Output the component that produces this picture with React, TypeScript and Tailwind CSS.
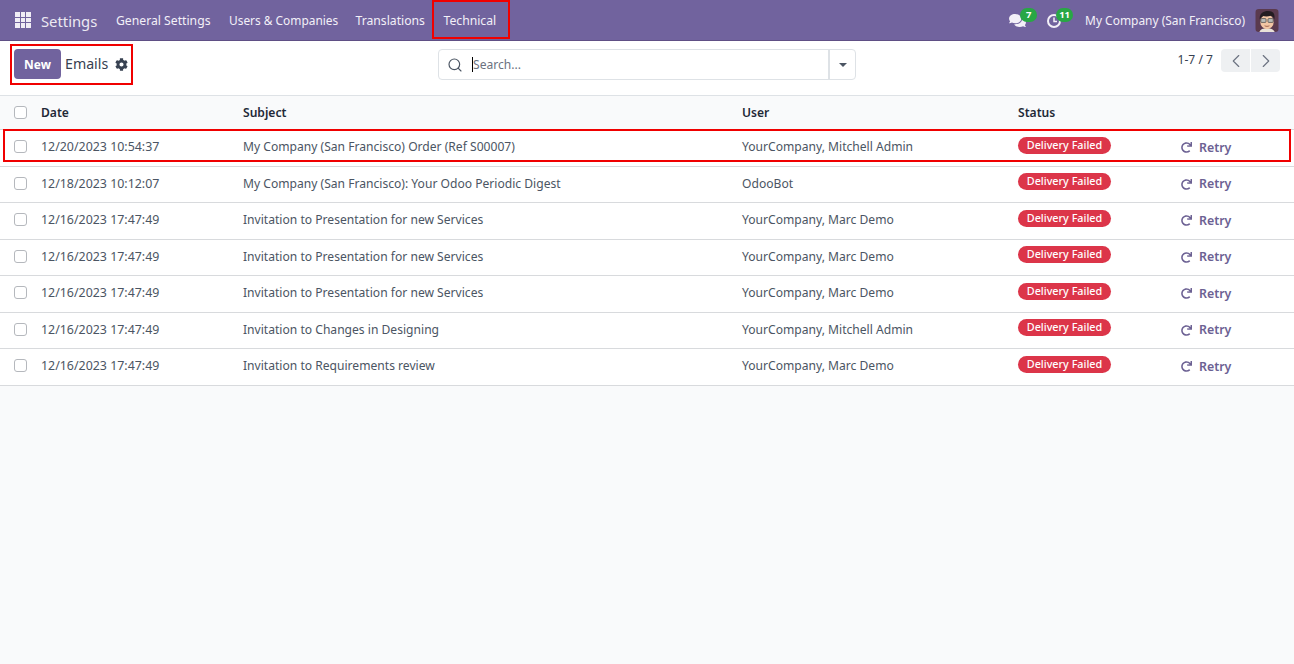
import { FaCog, FaComments, FaRedo } from "react-icons/fa";
import { Search, ChevronLeft, ChevronRight } from "lucide-react";

const rows = [
  ["12/20/2023 10:54:37", "My Company (San Francisco) Order (Ref S00007)", "YourCompany, Mitchell Admin"],
  ["12/18/2023 10:12:07", "My Company (San Francisco): Your Odoo Periodic Digest", "OdooBot"],
  ["12/16/2023 17:47:49", "Invitation to Presentation for new Services", "YourCompany, Marc Demo"],
  ["12/16/2023 17:47:49", "Invitation to Presentation for new Services", "YourCompany, Marc Demo"],
  ["12/16/2023 17:47:49", "Invitation to Presentation for new Services", "YourCompany, Marc Demo"],
  ["12/16/2023 17:47:49", "Invitation to Changes in Designing", "YourCompany, Mitchell Admin"],
  ["12/16/2023 17:47:49", "Invitation to Requirements review", "YourCompany, Marc Demo"],
];

function Avatar() {
  return (
    <svg viewBox="0 0 24 24" className="ml-[10px] h-[23px] w-6 rounded-[4px]">
      <rect width="24" height="24" fill="#5a3a4e" />
      <path d="M4 24c1-3 4-4 8-4s7 1 8 4z" fill="#e9e2d8" />
      <ellipse cx="12" cy="13.500" rx="7" ry="7.500" fill="#f2c6a4" />
      <path d="M4.500 11C3.500 5 8 2 13 2s8 3 6.500 9c-.5-2.500-1.500-3.500-3.500-4-3 1-6 1-8 .3-1.500 1-3 2-3.500 3.700z" fill="#241d22" />
      <rect x="5.500" y="10" width="5.500" height="4" rx="1" fill="#bdbdb8" stroke="#3a3a3a" strokeWidth="0.7" />
      <rect x="13" y="10" width="5.500" height="4" rx="1" fill="#bdbdb8" stroke="#3a3a3a" strokeWidth="0.7" />
      <path d="M9.500 17.500c1.500.8 3.500.8 5 0" stroke="#8a4a3a" strokeWidth="0.8" fill="none" />
    </svg>
  );
}

function Checkbox() {
  return <span className="block h-[13px] w-[13px] rounded-[3px] border border-[#b5b8bd] bg-white" />;
}

export default function App() {
  return (
    <div className="relative h-[664px] w-[1294px] overflow-hidden bg-[#f9fafb] font-['Noto_Sans',sans-serif] text-[12.1px] leading-[18px] text-[#4b5563]">
      {/* Top bar */}
      <nav className="flex h-[41px] items-center border-b border-[#5f4f85] bg-[#71639e] text-[#f3f0f8]">
        <div className="ml-[15px] grid h-4 w-4 grid-cols-3 gap-[1px]">
          {Array.from({ length: 9 }).map((_, i) => (
            <span key={i} className="bg-[#f0edf5]" />
          ))}
        </div>
        <span className="ml-[10px] w-[75px] pt-[2px] text-[14.8px] text-[#ece9f2]">Settings</span>
        <div className="grid grid-cols-[113px_126.500px_88px_auto] whitespace-nowrap pt-[2px] text-[12.2px]">
          <span>General Settings</span>
          <span className="-mt-px text-[11.9px]">Users &amp; Companies</span>
          <span>Translations</span>
          <span>Technical</span>
        </div>
        <div className="ml-auto flex items-center pr-[15px]">
          <div className="relative mr-[21px] h-4 w-[17px]">
            <FaComments className="absolute left-0 top-[1px] h-[15px] w-[17px] text-[#f3f0f8]" />
            <span className="absolute left-[11px] top-[-4px] flex h-[14px] w-[17px] items-center justify-center rounded-full bg-[#28a745] text-[9.500px] font-bold text-white">7</span>
          </div>
          <div className="relative mr-[24px] h-4 w-[14px]">
            <svg viewBox="0 0 14 14" className="absolute left-0 top-[2px] h-[14px] w-[14px]" fill="none" stroke="#f3f0f8">
              <circle cx="7" cy="7" r="6" strokeWidth="2" />
              <path d="M7 3.500V7.500H10" strokeWidth="1.500" />
            </svg>
            <span className="absolute left-[9px] top-[-4px] flex h-[14px] w-[17px] items-center justify-center rounded-full bg-[#28a745] text-[9.500px] font-bold text-white">11</span>
          </div>
          <span className="pt-[2px] text-[11.95px]">My Company (San Francisco)</span>
          <Avatar />
        </div>
      </nav>

      {/* Control panel */}
      <div className="relative flex h-[55px] items-start border-b border-[#dee2e6] bg-white">
        <div className="ml-[14px] mt-2 flex items-center">
          <button className="h-[30px] w-[47px] rounded-[4px] bg-[#71639e] pt-[2px] text-[12px] font-bold text-white">New</button>
          <span className="ml-[4px] text-[14.2px] text-[#374151]">Emails</span>
          <FaCog className="ml-[7px] h-[13px] w-[13px] text-[#374151]" />
        </div>
        <div className="absolute left-[438px] top-[8px] flex h-[31px] w-[418px] rounded-[4px] border border-[#dee2e6]">
          <div className="flex flex-1 items-center pl-[8px]">
            <Search className="h-4 w-4 text-[#4b5563]" strokeWidth={1.75} />
            <span className="ml-[9px] h-[15px] w-px bg-black" />
            <span className="text-[#6b7280]">Search...</span>
          </div>
          <div className="flex w-[27px] items-center justify-center border-l-2 border-[#dee2e6]">
            <span className="border-x-[4px] border-t-[4px] border-x-transparent border-t-[#4b5563]" />
          </div>
        </div>
        <div className="ml-auto mr-[14px] mt-2 flex items-center">
          <span className="mb-[1px] mr-[8px] text-[#374151]">1-7 / 7</span>
          <span className="flex h-[23px] w-[29px] items-center justify-center rounded-l-[4px] bg-[#eef0f2]">
            <ChevronLeft className="h-[22px] w-[22px] text-[#6b7280]" strokeWidth={1.25} />
          </span>
          <span className="ml-px flex h-[23px] w-[29px] items-center justify-center rounded-r-[4px] bg-[#eef0f2]">
            <ChevronRight className="h-[22px] w-[22px] text-[#6b7280]" strokeWidth={1.25} />
          </span>
        </div>
      </div>

      {/* List */}
      <div className="grid h-[34px] grid-cols-[41px_202px_499px_276px_1fr] items-center border-b border-[#d8dadd] pt-px font-semibold text-[#1f2937]">
        <span className="mb-[2px] pl-[14px]"><Checkbox /></span>
        <span>Date</span>
        <span>Subject</span>
        <span>User</span>
        <span>Status</span>
      </div>
      {rows.map((r, i) => (
        <div key={i} className="grid h-[36.5px] grid-cols-[41px_202px_499px_276px_162px_1fr] items-center border-b border-[#d8dadd] bg-white">
          <span className="mb-[2px] pl-[14px]"><Checkbox /></span>
          <span className="mb-px text-[12.4px]">{r[0]}</span>
          <span className="mb-px">{r[1]}</span>
          <span className="mb-px">{r[2]}</span>
          <span className="mb-[5px] flex h-[17px] w-[93px] items-center justify-center rounded-full bg-[#dc3549] pb-px text-[10.8px] font-medium text-white">Delivery Failed</span>
          <span className="flex items-center pl-px text-[12.4px] font-semibold text-[#6c6193]">
            <FaRedo className="mr-[7px] h-[11px] w-[11px]" />
            Retry
          </span>
        </div>
      ))}

      {/* Annotation boxes */}
      <div className="absolute left-[432px] top-0 h-[39px] w-[78px] border-2 border-[#f00000]" />
      <div className="absolute left-[10px] top-[44px] h-[41px] w-[123px] border-2 border-[#f00000]" />
      <div className="absolute left-[3px] top-[129px] h-[33px] w-[1288px] border-2 border-[#f00000]" />
    </div>
  );
}
